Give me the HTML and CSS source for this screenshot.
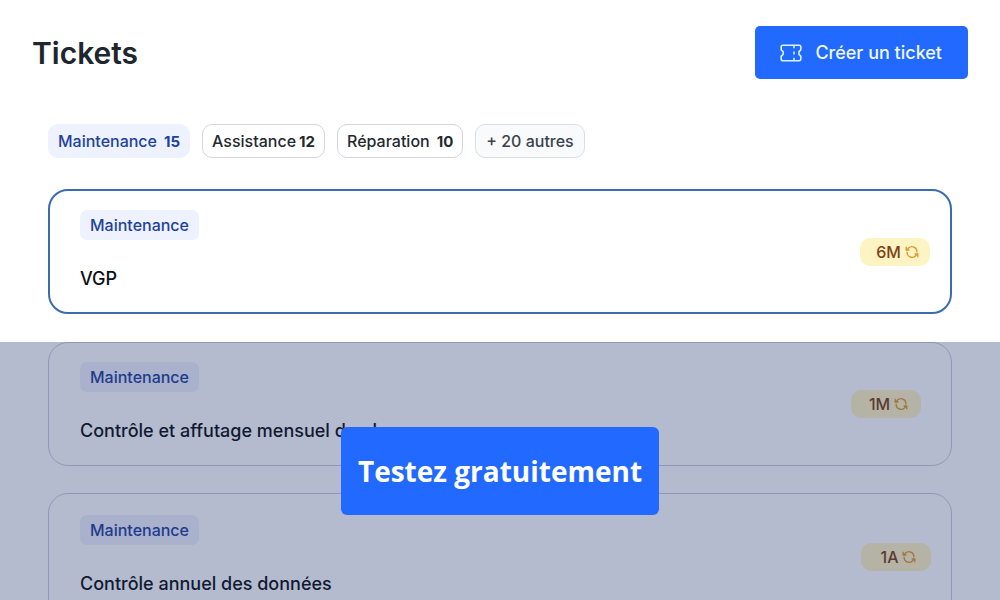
FILE: index.html
```
<!DOCTYPE html>
<html lang="fr">
<head>
    <meta charset="UTF-8">
    <meta name="viewport" content="width=device-width, initial-scale=1.0">
    <title>Tickets</title>
    <link rel="stylesheet" href="styles.css">
</head>
<body>
    <svg class="sprite" aria-hidden="true">
        <symbol id="icon-recur" viewBox="0 0 14 14">
            <path d="M1.2 1.8v3.2h3.2M1.6 5l2-2A4.9 4.9 0 0 1 11.9 6.6v1M12.8 12.2V9H9.6M12.4 9l-2 2A4.9 4.9 0 0 1 2.1 7.4V6.8"/>
        </symbol>
    </svg>

    <header class="header">
        <h1>Tickets</h1>
        <button type="button" class="create">
            <svg class="icon-ticket" viewBox="0 0 22 18" aria-hidden="true">
                <path d="M3 1.2h16.2c1 0 1.6.7 1.6 1.6v2.6c0 .5-.3.8-.7 1.1-1.7 1-1.7 4 0 5 .4.3.7.6.7 1.1v2.6c0 .9-.6 1.6-1.6 1.6H3c-1 0-1.8-.7-1.8-1.6v-2.6c0-.5.3-.8.7-1.1 1.9-1 1.9-4 0-5-.4-.3-.7-.6-.7-1.1V2.8c0-.9.8-1.6 1.8-1.6z"/>
                <path d="M14 1.5v2.7M14 7.4v3.2M14 13.8v2.7"/>
            </svg>
            Créer un ticket
        </button>
    </header>

    <nav class="filters">
        <button type="button" class="chip chip-active">Maintenance <b>15</b></button>
        <button type="button" class="chip chip-tight">Assistance <b>12</b></button>
        <button type="button" class="chip">Réparation <b>10</b></button>
        <button type="button" class="chip chip-more">+ 20 autres</button>
    </nav>

    <main class="tickets">
        <article class="ticket ticket-selected">
            <div>
                <span class="tag">Maintenance</span>
                <h2>VGP</h2>
            </div>
            <span class="period">6M <svg class="icon-recur"><use href="#icon-recur"/></svg></span>
        </article>
    </main>

    <section class="locked">
        <article class="ticket ticket-inset">
            <div>
                <span class="tag">Maintenance</span>
                <h2>Contrôle et affutage mensuel du plan</h2>
            </div>
            <span class="period">1M <svg class="icon-recur"><use href="#icon-recur"/></svg></span>
        </article>
        <article class="ticket ticket-last">
            <div>
                <span class="tag">Maintenance</span>
                <h2>Contrôle annuel des données</h2>
            </div>
            <span class="period">1A <svg class="icon-recur"><use href="#icon-recur"/></svg></span>
        </article>
        <!-- voile sur les tickets suivants -->
        <div class="veil">
            <button type="button" class="cta">Testez gratuitement</button>
        </div>
    </section>
</body>
</html>
```

FILE: styles.css
```
* {
    box-sizing: border-box;
}
body {
    font-family: Inter, "Liberation Sans", sans-serif;
    background-color: #fff;
    color: #0b0f14;
    display: flex;
    flex-direction: column;
    height: 100vh;
    margin: 0;
    overflow: hidden;
}
button {
    font-family: inherit;
    cursor: pointer;
}
.sprite {
    position: absolute;
    width: 0;
    height: 0;
}
.header {
    display: flex;
    justify-content: space-between;
    align-items: center;
    padding: 26px 32px 0;
}
.header h1 {
    margin: 0;
    font-size: 30px;
    line-height: 52px;
    font-weight: 600;
    color: #20262e;
}
.create {
    display: flex;
    align-items: center;
    gap: 13px;
    height: 53px;
    padding: 0 26px 0 25px;
    border: none;
    border-radius: 5px;
    background-color: #2169ff;
    color: #effaff;
    font-size: 18px;
    font-weight: 500;
}
.icon-ticket {
    width: 22px;
    height: 18px;
    fill: none;
    stroke: #d8f4ff;
    stroke-width: 1.6;
}
.filters {
    display: flex;
    gap: 12px;
    padding: 45px 48px 0;
}
.chip {
    display: flex;
    align-items: center;
    gap: 7px;
    height: 34px;
    padding: 0 9px;
    border: 1px solid #d3d6da;
    border-radius: 10px;
    background-color: #fff;
    color: #24292f;
    font-size: 16px;
    font-weight: 500;
}
.chip b {
    font-size: 15px;
    font-weight: 700;
}
.chip-tight {
    gap: 3px;
}
.chip-active {
    border-color: #eef2ff;
    background-color: #eef2ff;
    color: #1f429c;
}
.chip-more {
    padding: 0 10px;
    border-color: #d9dfe3;
    background-color: #f8fafc;
    color: #3b424d;
}
.tickets {
    padding: 31px 48px 28px;
}
.ticket {
    display: flex;
    justify-content: space-between;
    align-items: center;
    height: 124px;
    padding: 0 20px 0 31px;
    border: 1px solid #c9c8dc;
    border-radius: 20px;
}
.ticket-selected {
    height: 125px;
    padding: 0 20px 0 30px;
    border: 2px solid #3a6db0;
}
.ticket-inset {
    padding-right: 30px;
}
.ticket-last {
    height: 127px;
}
.ticket h2 {
    margin: 24px 0 0;
    font-size: 18px;
    line-height: 30px;
    font-weight: 500;
}
.tag {
    display: inline-block;
    padding: 0 10px;
    border-radius: 7px;
    background-color: #eef1fe;
    color: #1f429c;
    font-size: 16px;
    line-height: 30px;
    font-weight: 500;
}
.period {
    display: flex;
    justify-content: center;
    align-items: center;
    gap: 4px;
    width: 70px;
    height: 28px;
    padding-left: 5px;
    border-radius: 10px;
    background-color: #fef3c3;
    color: #7d3f14;
    font-size: 16px;
    font-weight: 500;
}
.icon-recur {
    width: 14px;
    height: 14px;
    fill: none;
    stroke: #dd9a2c;
    stroke-width: 1.3;
}
.locked {
    position: relative;
    flex: 1;
    display: flex;
    flex-direction: column;
    gap: 27px;
    min-height: 0;
    padding: 0 48px;
    overflow: hidden;
}
.locked .ticket {
    flex-shrink: 0;
}
.veil {
    position: absolute;
    inset: 0;
    display: flex;
    justify-content: center;
    align-items: center;
    background-color: rgba(30, 50, 105, 0.33);
}
.cta {
    padding: 22px 17px;
    border: none;
    border-radius: 6px;
    background-color: #2169ff;
    color: #fff;
    font-family: "Open Sans", "Noto Sans", sans-serif;
    font-size: 28px;
    line-height: 44px;
    font-weight: 700;
}
```
